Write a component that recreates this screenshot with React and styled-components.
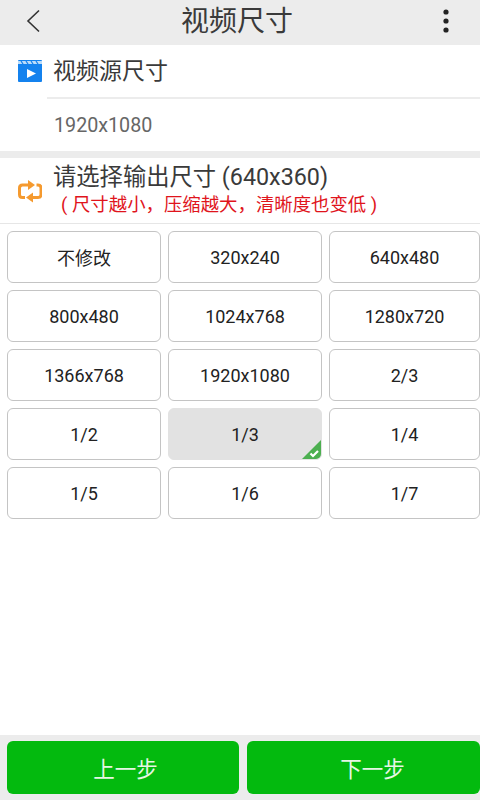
import React from "react";
import styled, { createGlobalStyle } from "styled-components";

const CJK = `"Roboto", "Noto Sans CJK SC", sans-serif`;

const GlobalStyle = createGlobalStyle`
  html, body { margin: 0; padding: 0; background: #fff; }
  body { font-family: ${CJK}; }
  * { box-sizing: border-box; }
`;

const Page = styled.div`
  width: 480px;
  height: 800px;
  display: flex;
  flex-direction: column;
  overflow: hidden;
  background: #fff;
`;

const Header = styled.header`
  height: 45px;
  flex: none;
  background: #ececec;
  display: flex;
  align-items: center;
  justify-content: space-between;
  padding: 0 24px 0 23px;
  position: relative;
`;

const Title = styled.h1`
  position: absolute;
  left: 0;
  right: 0;
  top: 0;
  margin: 0;
  padding-right: 6px;
  text-align: center;
  font-size: 28px;
  font-weight: 400;
  line-height: 43px;
  color: #3a3a3a;
`;

const IconButton = styled.span`
  display: flex;
  width: 20px;
  height: 26px;
  margin-top: -4px;
  align-items: center;
  justify-content: center;
`;

const Source = styled.section`
  height: 113px;
  flex: none;
  border-bottom: 7px solid #ececec;
`;

const SourceHead = styled.div`
  height: 54px;
  display: flex;
`;

const IconSlot = styled.div`
  width: 47px;
  flex: none;
  display: flex;
  justify-content: center;
  align-items: ${(p) => (p.$center ? "center" : "flex-start")};
  padding: ${(p) => (p.$center ? "0 0 0 13px" : "15px 0 0 13px")};
`;

const SourceLabel = styled.div`
  flex: 1;
  border-bottom: 2px solid #ececec;
  padding: 13px 0 0 6px;
  font-size: 23px;
  line-height: 28px;
  color: #3a3a3a;
`;

const SourceValue = styled.div`
  padding: 15px 0 0 54px;
  font-size: 19.700px;
  line-height: 24px;
  color: #666;
`;

const Output = styled.section`
  height: 66px;
  flex: none;
  display: flex;
  border-bottom: 1px solid #e6e6e6;
`;

const OutputText = styled.div`
  padding: 5px 0 0 6px;
`;

const OutputTitle = styled.div`
  font-size: 23.300px;
  line-height: 29px;
  color: #3a3a3a;
`;

const OutputHint = styled.div`
  font-size: 18.400px;
  line-height: 25px;
  color: #e0141c;
  white-space: pre;
  margin-left: -1px;
`;

const Grid = styled.div`
  flex: 1;
  display: grid;
  grid-template-columns: 154px 154px 151px;
  grid-auto-rows: 52px;
  gap: 7px;
  padding: 7px 0 0 7px;
  align-content: start;
`;

const Cell = styled.div`
  position: relative;
  overflow: hidden;
  display: flex;
  align-items: center;
  justify-content: center;
  border-radius: 6px;
  border: 1px solid ${(p) => (p.$selected ? "#e2e2e2" : "#c4c4c4")};
  background: ${(p) => (p.$selected ? "#e2e2e2" : "#fff")};
  font-size: 18px;
  color: #222;
`;

const Corner = styled.svg`
  position: absolute;
  right: -1px;
  bottom: -1px;
`;

const Footer = styled.footer`
  height: 65px;
  flex: none;
  background: #ececec;
  display: grid;
  grid-template-columns: 232px 233px;
  gap: 8px;
  padding: 6px 0 6px 7px;
`;

const StepButton = styled.div`
  display: flex;
  align-items: center;
  justify-content: center;
  border-radius: 6px;
  background: #03ba0e;
  color: #e6f6e4;
  font-size: 21.500px;
  padding-left: ${(p) => p.$shift}px;
`;

const sizes = [
  "不修改", "320x240", "640x480",
  "800x480", "1024x768", "1280x720",
  "1366x768", "1920x1080", "2/3",
  "1/2", "1/3", "1/4",
  "1/5", "1/6", "1/7",
];

const BackIcon = () => (
  <svg width="14" height="24" viewBox="0 0 14 24" fill="none">
    <path d="M13 1.500 2 12l11 10.500" stroke="#333" strokeWidth="1.600" />
  </svg>
);

const MoreIcon = () => (
  <svg width="8" height="24" viewBox="0 0 8 24" fill="#222">
    <circle cx="4" cy="3" r="2.600" />
    <circle cx="4" cy="12" r="2.600" />
    <circle cx="4" cy="21" r="2.600" />
  </svg>
);

const VideoIcon = () => (
  <svg width="24" height="22" viewBox="0 0 24 22">
    <rect width="24" height="22" rx="1" fill="#1482ee" />
    <rect y="1" width="24" height="3" fill="#bcdcf9" />
    <path d="M3 1l2 3M8 1l2 3M13 1l2 3M18 1l2 3" stroke="#1482ee" strokeWidth="1.300" />
    <path d="M9 9l9 4.500-9 4.500z" fill="#fff" />
  </svg>
);

const LoopIcon = () => (
  <svg width="24" height="24" viewBox="0 0 24 24" fill="none">
    <path d="M10 6H4.500Q1.500 6 1.500 9v6.500q0 3 3 3H7" stroke="#f59a2f" strokeWidth="3" />
    <path d="M15 18.500h5q3 0 3-3V9q0-3-3-3h-1.500" stroke="#f59a2f" strokeWidth="3" />
    <path d="M10 1l7 5-7 5z" fill="#f59a2f" />
    <path d="M15 13.500l-7 5 7 5z" fill="#f59a2f" />
  </svg>
);

const SelectedMark = () => (
  <Corner width="21" height="21" viewBox="0 0 21 21">
    <path d="M21 0V15q0 6-6 6H0z" fill="#4caf50" />
    <path d="M9.500 14.500l2.500 2.500 5-5" stroke="#fff" strokeWidth="2.200" fill="none" />
  </Corner>
);

const App = () => (
  <Page>
    <GlobalStyle />
    <Header>
      <IconButton><BackIcon /></IconButton>
      <Title>视频尺寸</Title>
      <IconButton><MoreIcon /></IconButton>
    </Header>
    <Source>
      <SourceHead>
        <IconSlot><VideoIcon /></IconSlot>
        <SourceLabel>视频源尺寸</SourceLabel>
      </SourceHead>
      <SourceValue>1920x1080</SourceValue>
    </Source>
    <Output>
      <IconSlot $center><LoopIcon /></IconSlot>
      <OutputText>
        <OutputTitle>请选择输出尺寸 (640x360)</OutputTitle>
        <OutputHint>  ( 尺寸越小，压缩越大，清晰度也变低 )</OutputHint>
      </OutputText>
    </Output>
    <Grid>
      {sizes.map((size) => (
        <Cell key={size} $selected={size === "1/3"}>
          {size}
          {size === "1/3" && <SelectedMark />}
        </Cell>
      ))}
    </Grid>
    <Footer>
      <StepButton $shift={5}>上一步</StepButton>
      <StepButton $shift={18}>下一步</StepButton>
    </Footer>
  </Page>
);

export default App;
